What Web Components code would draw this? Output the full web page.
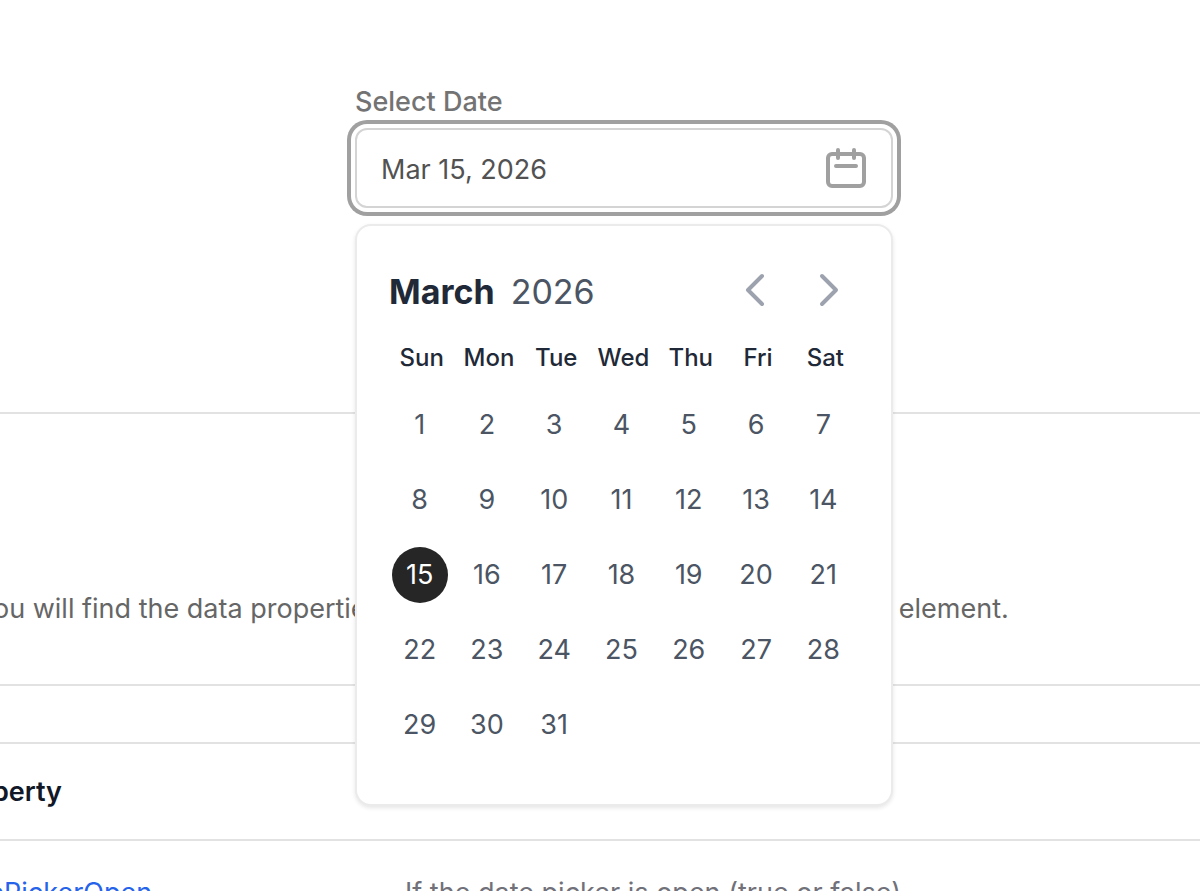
<!DOCTYPE html>
<html lang="en">
<head>
<meta charset="utf-8">
<title>Date Picker</title>
<style>
    body {
        margin: 0;
        height: 100vh;
        overflow: hidden;
        background: #fff;
        color: #666;
        font-family: Inter, "Liberation Sans", sans-serif;
        font-size: 27px;
        line-height: 40px;
    }
</style>
</head>
<body>
<doc-page>
    <date-picker slot="preview" label="Select Date" value="2026-03-15"></date-picker>
    <span slot="intro">Below you will find the data properties you can use to customize and style this element.</span>
    <property-table></property-table>
</doc-page>

<script>
class DocPage extends HTMLElement {
    constructor() {
        super();
        this.attachShadow({ mode: 'open' });
        this.shadowRoot.innerHTML = `
        <style>
            :host {
                display: block;
                margin: 0 -155px 0 -107px;
            }
            .preview {
                display: flex;
                justify-content: center;
                box-sizing: border-box;
                height: 414px;
                padding-top: 80px;
                border-bottom: 2px solid #e2e2e2;
            }
            p {
                margin: 0;
                padding: 175px 0 55px;
            }
        </style>
        <section class="preview"><slot name="preview"></slot></section>
        <p><slot name="intro"></slot></p>
        <slot></slot>`;
    }
}

class DatePicker extends HTMLElement {
    constructor() {
        super();
        this._months = ['January', 'February', 'March', 'April', 'May', 'June', 'July',
            'August', 'September', 'October', 'November', 'December'];
        this._weekdays = ['Sun', 'Mon', 'Tue', 'Wed', 'Thu', 'Fri', 'Sat'];
        this.attachShadow({ mode: 'open' });
        this.shadowRoot.innerHTML = `
        <style>
            :host {
                display: block;
                position: relative;
                width: 538px;
                height: 128px;
            }
            label {
                display: block;
                height: 48px;
                color: #737373;
                font-weight: 500;
                line-height: 44px;
            }
            .field {
                display: flex;
                align-items: center;
                box-sizing: border-box;
                height: 80px;
                padding: 0 13px 0 24px;
                border: 2px solid #d4d4d4;
                border-radius: 12px;
                background: #fff;
                box-shadow: 0 0 0 4px #fff, 0 0 0 8px #a0a0a0;
            }
            input {
                flex: 1;
                min-width: 0;
                padding: 3px 0 0;
                border: 0;
                outline: 0;
                background: none;
                color: #525252;
                font: inherit;
            }
            button {
                display: flex;
                align-items: center;
                justify-content: center;
                padding: 8px;
                border: 0;
                border-radius: 50%;
                background: none;
                color: #9ca3af;
                font: inherit;
                cursor: pointer;
            }
            .field button {
                color: #a0a0a0;
            }
            svg {
                width: 48px;
                height: 48px;
                fill: none;
                stroke: currentColor;
                stroke-width: 2;
                stroke-linecap: round;
                stroke-linejoin: round;
            }
            .popup {
                position: absolute;
                z-index: 10;
                top: 144px;
                left: 0;
                box-sizing: border-box;
                width: 100%;
                padding: 32px 31px 42px 32px;
                border: 2px solid #ebebeb;
                border-radius: 16px;
                background: #fff;
                box-shadow: 0 2px 4px rgba(0, 0, 0, 0.1);
            }
            header {
                display: flex;
                align-items: center;
                gap: 8px;
                margin-bottom: 12px;
            }
            h2 {
                flex: 1;
                margin: 0;
                padding-top: 4px;
                color: #1f2937;
                font-size: 34px;
                font-weight: 700;
                line-height: 56px;
            }
            .year {
                margin-left: 8px;
                color: #4b5563;
                font-weight: 400;
            }
            table {
                width: 100%;
                table-layout: fixed;
                border-collapse: collapse;
            }
            th {
                box-sizing: border-box;
                height: 53px;
                padding: 0 2px 6px 0;
                color: #1f2937;
                font-size: 24px;
                font-weight: 500;
                line-height: 32px;
            }
            td {
                height: 75px;
                padding: 0 6px 0 0;
            }
            td button {
                width: 56px;
                height: 56px;
                margin: 0 auto;
                padding: 0;
                color: #4b5563;
            }
            td button[aria-pressed="true"] {
                background: #262626;
                color: #fff;
            }
        </style>
        <label for="date"></label>
        <div class="field">
            <input id="date" type="text" readonly>
            <button class="toggle" type="button" aria-label="Toggle calendar">
                <svg viewBox="0 0 24 24"><path d="M8 7V3m8 4V3m-9 8h10M5 21h14a2 2 0 002-2V7a2 2 0 00-2-2H5a2 2 0 00-2 2v12a2 2 0 002 2z"/></svg>
            </button>
        </div>
        <div class="popup">
            <header>
                <h2><span class="month"></span> <span class="year"></span></h2>
                <button class="prev" type="button" aria-label="Previous month">
                    <svg viewBox="0 0 24 24"><path d="M15 19l-7-7 7-7"/></svg>
                </button>
                <button class="next" type="button" aria-label="Next month">
                    <svg viewBox="0 0 24 24"><path d="M9 5l7 7-7 7"/></svg>
                </button>
            </header>
            <table>
                <thead><tr>${this._weekdays.map(day => `<th scope="col">${day}</th>`).join('')}</tr></thead>
                <tbody></tbody>
            </table>
        </div>`;
    }

    connectedCallback() {
        const [year, month, day] = this.getAttribute('value').split('-').map(Number);
        this._selected = new Date(year, month - 1, day);
        this._shown = new Date(year, month - 1, 1);
        this._popup = this.shadowRoot.querySelector('.popup');
        this.shadowRoot.querySelector('label').textContent = this.getAttribute('label');
        this.shadowRoot.querySelector('.toggle').addEventListener('click', () => {
            this._popup.hidden = !this._popup.hidden;
        });
        this.shadowRoot.querySelector('.prev').addEventListener('click', () => this._move(-1));
        this.shadowRoot.querySelector('.next').addEventListener('click', () => this._move(1));
        this.shadowRoot.querySelector('tbody').addEventListener('click', this._pick.bind(this));
        this._render();
    }

    _move(step) {
        this._shown.setMonth(this._shown.getMonth() + step);
        this._render();
    }

    _pick(event) {
        const button = event.target.closest('button');
        if (!button) {
            return;
        }
        this._selected = new Date(this._shown.getFullYear(), this._shown.getMonth(), Number(button.textContent));
        this._render();
    }

    _render() {
        const year = this._shown.getFullYear();
        const month = this._shown.getMonth();
        const selected = this._selected;
        this.shadowRoot.querySelector('input').value =
            `${this._months[selected.getMonth()].slice(0, 3)} ${selected.getDate()}, ${selected.getFullYear()}`;
        this.shadowRoot.querySelector('.month').textContent = this._months[month];
        this.shadowRoot.querySelector('.year').textContent = year;

        const cells = Array(this._shown.getDay()).fill('<td></td>');
        const count = new Date(year, month + 1, 0).getDate();
        for (let day = 1; day <= count; day++) {
            const pressed = new Date(year, month, day).getTime() === selected.getTime();
            cells.push(`<td><button type="button" aria-pressed="${pressed}">${day}</button></td>`);
        }
        let rows = '';
        while (cells.length) {
            rows += `<tr>${cells.splice(0, 7).join('')}</tr>`;
        }
        this.shadowRoot.querySelector('tbody').innerHTML = rows;
    }
}

class PropertyTable extends HTMLElement {
    constructor() {
        super();
        this.attachShadow({ mode: 'open' });
        this.shadowRoot.innerHTML = `
        <style>
            :host {
                display: block;
                padding-top: 56px;
                border-top: 2px solid #e2e2e2;
            }
            table {
                width: 100%;
                border-collapse: collapse;
                border-top: 2px solid #e2e2e2;
                table-layout: fixed;
                text-align: left;
            }
            th {
                padding: 28px 0 27px 55px;
                color: #111827;
                font-weight: 600;
            }
            .name {
                width: 402px;
            }
            tbody tr {
                border-top: 2px solid #e2e2e2;
            }
            td {
                padding: 32px 0 32px 55px;
                color: #71717a;
            }
            a {
                color: #2563eb;
                text-decoration: none;
            }
        </style>
        <table>
            <thead><tr><th class="name" scope="col">Property</th><th scope="col">Details</th></tr></thead>
            <tbody><tr><td><a href="#datePickerOpen">datePickerOpen</a></td><td>If the date picker is open (true or false)</td></tr></tbody>
        </table>`;
    }
}

customElements.define('doc-page', DocPage);
customElements.define('date-picker', DatePicker);
customElements.define('property-table', PropertyTable);
</script>
</body>
</html>
